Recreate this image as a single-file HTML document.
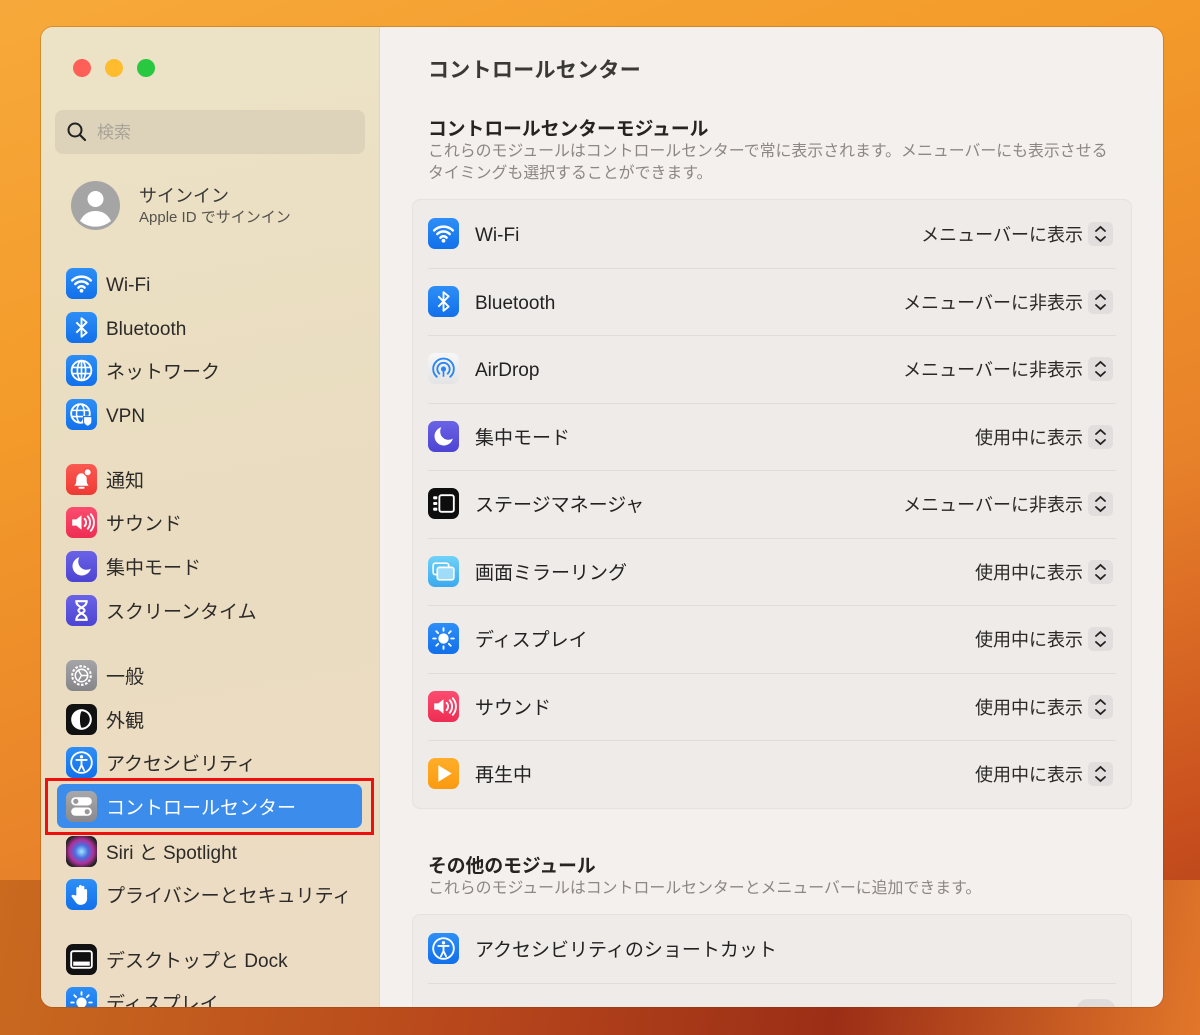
<!DOCTYPE html>
<html><head><meta charset="utf-8">
<style>
*{margin:0;padding:0;box-sizing:border-box}
html,body{width:1200px;height:1035px;overflow:hidden}
body{position:relative;font-family:"Liberation Sans","Noto Sans CJK JP",sans-serif;
background:linear-gradient(160deg,#f6a93a 0%,#f39a2a 30%,#e8822a 60%,#c9501e 85%,#a93a18 100%);}
.bgshape{position:absolute;left:0;top:880px;width:1200px;height:155px;background:linear-gradient(100deg,#c96a1f 0%,#b8471c 40%,#9b2e16 70%,#e2772a 100%)}
.win{position:absolute;left:41px;top:27px;width:1122px;height:980px;border-radius:12px;overflow:hidden;background:#f4f0ee;box-shadow:0 0 0 1px rgba(120,60,0,.25)}
.side{position:absolute;left:0;top:0;width:339px;height:980px;background:linear-gradient(170deg,#ece3c6 0%,#eadcc0 50%,#ecdcc4 100%);border-right:1px solid #e0d6c8}
.dot{position:absolute;top:32px;width:18px;height:18px;border-radius:50%}
.search{position:absolute;left:14px;top:83px;width:310px;height:44px;border-radius:8px;background:#ddd3bb}
.search span{position:absolute;left:42px;top:1px;line-height:44px;font-size:17px;color:#aaa397}
.si{position:absolute;left:25px;height:31px;width:300px}
.ic{position:absolute;left:0;top:0;width:31px;height:31px;border-radius:7px;overflow:hidden}
.ic svg{width:31px;height:31px;display:block}
.si .t{position:absolute;left:40px;top:2px;line-height:31px;font-size:19px;color:#2c2a28;white-space:nowrap}
.sel{position:absolute;left:16px;top:757px;width:305px;height:44px;border-radius:7px;background:#3c8cec}
.redbox{position:absolute;left:4px;top:751px;width:329px;height:57px;border:3px solid #f00f0f}
.main{position:absolute;left:340px;top:0;width:782px;height:980px}
h1{position:absolute;left:47px;top:27px;font-size:21px;font-weight:bold;color:#3b3936;letter-spacing:.3px}
h2{position:absolute;left:47px;font-size:18.8px;font-weight:bold;color:#262422;line-height:24px}
.desc{position:absolute;left:47px;font-size:15.9px;color:#8c8784;line-height:22px;width:720px;white-space:nowrap}
.card{position:absolute;left:31px;width:720px;border-radius:8px;background:#efebe9;border:1px solid #e6e2df}
.row{position:relative;height:67.5px}
.row+.row:before{content:"";position:absolute;left:15px;right:15px;top:0;border-top:1px solid #e0dcd9}
.row .ic{left:15px;top:18px}
.row .t{position:absolute;left:62px;top:20px;line-height:31px;font-size:19px;color:#222;white-space:nowrap}
.row .v{position:absolute;right:48px;top:20px;line-height:31px;font-size:18px;color:#2a2826;white-space:nowrap}
.step{position:absolute;right:18px;top:22px;width:25px;height:24px;border-radius:5px;background:#e2dedd}
</style></head><body>
<div class="bgshape"></div>
<div class="win">
<div class="side">
 <div class="dot" style="left:32px;background:#fe5f57"></div>
 <div class="dot" style="left:64px;background:#febc2e"></div>
 <div class="dot" style="left:96px;background:#28c840"></div>
 <div class="search"><svg style="position:absolute;left:11px;top:11px" width="22" height="22" viewBox="0 0 22 22"><circle cx="9" cy="9" r="6.5" fill="none" stroke="#222" stroke-width="2"/><path d="M14 14l5 5" stroke="#222" stroke-width="2.2" stroke-linecap="round"/></svg><span>検索</span></div>
 <svg style="position:absolute;left:30px;top:154px" width="49" height="49" viewBox="0 0 49 49"><circle cx="24.5" cy="24.5" r="24.5" fill="#a6a5a6"/><circle cx="24.5" cy="18" r="8" fill="#fff"/><path d="M9 40c4-8 10-10 15.5-10S36 32 40 40a24 24 0 0 1-31 0z" fill="#fff"/></svg>
 <div style="position:absolute;left:98px;top:156px;line-height:26px;font-size:18px;color:#3a3836">サインイン</div>
 <div style="position:absolute;left:98px;top:180px;line-height:22px;font-size:15px;color:#55524e">Apple ID でサインイン</div>

 <div class="si" style="top:241px"><div class="ic" style="background:linear-gradient(#2e8ff7,#1270ea)"><svg viewBox="0 0 30 30"><path d="M6 12a13 13 0 0 1 18 0M9 15.5a8.5 8.5 0 0 1 12 0M12 19a4 4 0 0 1 6 0" fill="none" stroke="#fff" stroke-width="2.4" stroke-linecap="round"/><circle cx="15" cy="22" r="1.8" fill="#fff"/></svg></div><span class="t">Wi-Fi</span></div>
 <div class="si" style="top:285px"><div class="ic" style="background:linear-gradient(#2e8ff7,#1270ea)"><svg viewBox="0 0 30 30"><path d="M10 10l10 10-5 4V6l5 4-10 10" fill="none" stroke="#fff" stroke-width="1.8" stroke-linejoin="round"/></svg></div><span class="t">Bluetooth</span></div>
 <div class="si" style="top:328px"><div class="ic" style="background:linear-gradient(#2e8ff7,#1270ea)"><svg viewBox="0 0 30 30"><circle cx="15" cy="15" r="9.5" fill="none" stroke="#fff" stroke-width="1.8"/><ellipse cx="15" cy="15" rx="4" ry="9.5" fill="none" stroke="#fff" stroke-width="1.6"/><path d="M6 12h18M6 18h18M15 5.5v19" stroke="#fff" stroke-width="1.6"/></svg></div><span class="t">ネットワーク</span></div>
 <div class="si" style="top:372px"><div class="ic" style="background:linear-gradient(#2e8ff7,#1270ea)"><svg viewBox="0 0 30 30"><circle cx="14" cy="14" r="9" fill="none" stroke="#fff" stroke-width="1.8"/><ellipse cx="14" cy="14" rx="3.8" ry="9" fill="none" stroke="#fff" stroke-width="1.5"/><path d="M5 11h18M5 17h18" stroke="#fff" stroke-width="1.5"/><path d="M17 17h8v5c0 2-2 3.5-4 4.5-2-1-4-2.5-4-4.5z" fill="#fff" stroke="#1a78ee" stroke-width="1"/></svg></div><span class="t">VPN</span></div>

 <div class="si" style="top:437px"><div class="ic" style="background:linear-gradient(#fb5a52,#ee3a34)"><svg viewBox="0 0 30 30"><path d="M8 21c2-2 2-4 2-7a5 5 0 0 1 10 0c0 3 0 5 2 7z" fill="#fff"/><rect x="12" y="22" width="6" height="2" rx="1" fill="#fff"/><circle cx="21" cy="8" r="3.5" fill="#fff" stroke="#f34a43" stroke-width="1.2"/></svg></div><span class="t">通知</span></div>
 <div class="si" style="top:480px"><div class="ic" style="background:linear-gradient(#fb4d6f,#ee2d54)"><svg viewBox="0 0 30 30"><path d="M6 12h4l5-4v14l-5-4H6z" fill="#fff"/><path d="M18 11.5a5 5 0 0 1 0 7M21 9a9 9 0 0 1 0 12M24 7a12 12 0 0 1 0 16" fill="none" stroke="#fff" stroke-width="1.8" stroke-linecap="round"/></svg></div><span class="t">サウンド</span></div>
 <div class="si" style="top:524px"><div class="ic" style="background:linear-gradient(#6a62e6,#4d45d2)"><svg viewBox="0 0 30 30"><path d="M13 6a9 9 0 1 0 11 11A8 8 0 0 1 13 6z" fill="#fff"/></svg></div><span class="t">集中モード</span></div>
 <div class="si" style="top:568px"><div class="ic" style="background:linear-gradient(#6a62e6,#4d45d2)"><svg viewBox="0 0 30 30"><path d="M9 6h12M9 24h12M10 6c0 6 8 6 8 9s-8 3-8 9M20 6c0 6-8 6-8 9s8 3 8 9" fill="none" stroke="#fff" stroke-width="2"/></svg></div><span class="t">スクリーンタイム</span></div>

 <div class="si" style="top:633px"><div class="ic" style="background:linear-gradient(#a5a5a8,#86868a)"><svg viewBox="0 0 30 30"><circle cx="15" cy="15" r="9" fill="none" stroke="#fff" stroke-width="2" stroke-dasharray="2.5 1.5"/><circle cx="15" cy="15" r="6" fill="none" stroke="#fff" stroke-width="1.5"/><path d="M15 15l-3-5M15 15h6M15 15l-3 5" stroke="#fff" stroke-width="1.4"/></svg></div><span class="t">一般</span></div>
 <div class="si" style="top:677px"><div class="ic" style="background:#111"><svg viewBox="0 0 30 30"><circle cx="15" cy="15" r="10" fill="#fff"/><path d="M15 7a8 8 0 0 1 0 16c-2-3-2-13 0-16z" fill="#111"/></svg></div><span class="t">外観</span></div>
 <div class="si" style="top:720px"><div class="ic" style="background:linear-gradient(#2e8ff7,#1270ea)"><svg viewBox="0 0 30 30"><circle cx="15" cy="15" r="10" fill="none" stroke="#fff" stroke-width="1.8"/><circle cx="15" cy="9.5" r="1.6" fill="#fff"/><path d="M10 12.5h10M15 12.5v5l-2.5 5M15 17.5l2.5 5" fill="none" stroke="#fff" stroke-width="1.8" stroke-linecap="round"/></svg></div><span class="t">アクセシビリティ</span></div>
 <div class="redbox"></div>
 <div class="sel"></div>
 <div class="si" style="top:764px"><div class="ic" style="background:linear-gradient(#a8a8ab,#8a8a8e)"><svg viewBox="0 0 30 30"><rect x="5" y="6" width="20" height="8" rx="4" fill="#fff"/><circle cx="9.5" cy="10" r="2.5" fill="#999"/><rect x="5" y="16" width="20" height="8" rx="4" fill="#fff"/><circle cx="20.5" cy="20" r="2.5" fill="#999"/></svg></div><span class="t" style="color:#fff">コントロールセンター</span></div>
 <div class="si" style="top:809px"><div class="ic" style="background:radial-gradient(circle at 50% 50%,#9fe7ff 0,#4a6ee0 30%,#b0309a 55%,#222 80%)"></div><span class="t">Siri と Spotlight</span></div>
 <div class="si" style="top:852px"><div class="ic" style="background:linear-gradient(#2e8ff7,#1270ea)"><svg viewBox="0 0 30 30"><path d="M10 16V9a1.3 1.3 0 0 1 2.6 0v5V7a1.3 1.3 0 0 1 2.6 0v7V8a1.3 1.3 0 0 1 2.6 0v7v-4a1.3 1.3 0 0 1 2.6 0v8c0 4-3 6-6 6s-4-1-6-4l-3-4a1.3 1.3 0 0 1 2-1.5z" fill="#fff"/></svg></div><span class="t">プライバシーとセキュリティ</span></div>

 <div class="si" style="top:917px"><div class="ic" style="background:#111"><svg viewBox="0 0 30 30"><rect x="5" y="7" width="20" height="16" rx="2" fill="none" stroke="#fff" stroke-width="1.8"/><rect x="7" y="17" width="16" height="4" fill="#fff"/></svg></div><span class="t">デスクトップと Dock</span></div>
 <div class="si" style="top:960px"><div class="ic" style="background:linear-gradient(#2e8ff7,#1270ea)"><svg viewBox="0 0 30 30"><circle cx="15" cy="15" r="5" fill="#fff"/><path d="M15 5v2.5M5 15h2.5M22.5 15H25M8 8l1.8 1.8M20.2 9.8L22 8" stroke="#fff" stroke-width="1.8" stroke-linecap="round"/></svg></div><span class="t">ディスプレイ</span></div>
</div>

<div class="main">
 <h1>コントロールセンター</h1>
 <h2 style="top:90px">コントロールセンターモジュール</h2>
 <div class="desc" style="top:114px">これらのモジュールはコントロールセンターで常に表示されます。メニューバーにも表示させる<br>タイミングも選択することができます。</div>
 <div class="card" style="top:172px">
  <div class="row"><div class="ic" style="background:linear-gradient(#2e8ff7,#1270ea)"><svg viewBox="0 0 30 30"><path d="M6 12a13 13 0 0 1 18 0M9 15.5a8.5 8.5 0 0 1 12 0M12 19a4 4 0 0 1 6 0" fill="none" stroke="#fff" stroke-width="2.4" stroke-linecap="round"/><circle cx="15" cy="22" r="1.8" fill="#fff"/></svg></div><span class="t">Wi-Fi</span><span class="v">メニューバーに表示</span><div class="step"><svg width="25" height="24" viewBox="0 0 25 24"><path d="M8 9l4.5-4 4.5 4M8 15l4.5 4 4.5-4" fill="none" stroke="#222" stroke-width="1.8" stroke-linecap="round"/></svg></div></div>
  <div class="row"><div class="ic" style="background:linear-gradient(#2e8ff7,#1270ea)"><svg viewBox="0 0 30 30"><path d="M10 10l10 10-5 4V6l5 4-10 10" fill="none" stroke="#fff" stroke-width="1.8" stroke-linejoin="round"/></svg></div><span class="t">Bluetooth</span><span class="v">メニューバーに非表示</span><div class="step"><svg width="25" height="24" viewBox="0 0 25 24"><path d="M8 9l4.5-4 4.5 4M8 15l4.5 4 4.5-4" fill="none" stroke="#222" stroke-width="1.8" stroke-linecap="round"/></svg></div></div>
  <div class="row"><div class="ic" style="background:linear-gradient(#f7f7f7,#e4e4e4)"><svg viewBox="0 0 30 30"><path d="M11 20a6 6 0 1 1 8 0M8.5 23a10 10 0 1 1 13 0" fill="none" stroke="#2a86f2" stroke-width="1.8" stroke-linecap="round"/><circle cx="15" cy="15.5" r="2.5" fill="#2a86f2"/><path d="M15 17v6" stroke="#2a86f2" stroke-width="1.6"/></svg></div><span class="t">AirDrop</span><span class="v">メニューバーに非表示</span><div class="step"><svg width="25" height="24" viewBox="0 0 25 24"><path d="M8 9l4.5-4 4.5 4M8 15l4.5 4 4.5-4" fill="none" stroke="#222" stroke-width="1.8" stroke-linecap="round"/></svg></div></div>
  <div class="row"><div class="ic" style="background:linear-gradient(#6a62e6,#4d45d2)"><svg viewBox="0 0 30 30"><path d="M13 6a9 9 0 1 0 11 11A8 8 0 0 1 13 6z" fill="#fff"/></svg></div><span class="t">集中モード</span><span class="v">使用中に表示</span><div class="step"><svg width="25" height="24" viewBox="0 0 25 24"><path d="M8 9l4.5-4 4.5 4M8 15l4.5 4 4.5-4" fill="none" stroke="#222" stroke-width="1.8" stroke-linecap="round"/></svg></div></div>
  <div class="row"><div class="ic" style="background:#0e0e0e"><svg viewBox="0 0 30 30"><rect x="11" y="7" width="14" height="16" rx="2" fill="none" stroke="#fff" stroke-width="1.8"/><rect x="5" y="8" width="4" height="3" rx="1" fill="#fff"/><rect x="5" y="13.5" width="4" height="3" rx="1" fill="#fff"/><rect x="5" y="19" width="4" height="3" rx="1" fill="#fff"/></svg></div><span class="t">ステージマネージャ</span><span class="v">メニューバーに非表示</span><div class="step"><svg width="25" height="24" viewBox="0 0 25 24"><path d="M8 9l4.5-4 4.5 4M8 15l4.5 4 4.5-4" fill="none" stroke="#222" stroke-width="1.8" stroke-linecap="round"/></svg></div></div>
  <div class="row"><div class="ic" style="background:linear-gradient(#6fd2f8,#3aa9ee)"><svg viewBox="0 0 30 30"><rect x="5" y="7" width="15" height="11" rx="2" fill="none" stroke="#fff" stroke-width="1.6"/><rect x="9" y="11" width="16" height="12" rx="2" fill="#9fdcf8" stroke="#fff" stroke-width="1.6"/></svg></div><span class="t">画面ミラーリング</span><span class="v">使用中に表示</span><div class="step"><svg width="25" height="24" viewBox="0 0 25 24"><path d="M8 9l4.5-4 4.5 4M8 15l4.5 4 4.5-4" fill="none" stroke="#222" stroke-width="1.8" stroke-linecap="round"/></svg></div></div>
  <div class="row"><div class="ic" style="background:linear-gradient(#2e8ff7,#1270ea)"><svg viewBox="0 0 30 30"><circle cx="15" cy="15" r="5" fill="#fff"/><path d="M15 5v2.5M15 22.5V25M5 15h2.5M22.5 15H25M8 8l1.8 1.8M20.2 20.2L22 22M8 22l1.8-1.8M20.2 9.8L22 8" stroke="#fff" stroke-width="1.8" stroke-linecap="round"/></svg></div><span class="t">ディスプレイ</span><span class="v">使用中に表示</span><div class="step"><svg width="25" height="24" viewBox="0 0 25 24"><path d="M8 9l4.5-4 4.5 4M8 15l4.5 4 4.5-4" fill="none" stroke="#222" stroke-width="1.8" stroke-linecap="round"/></svg></div></div>
  <div class="row"><div class="ic" style="background:linear-gradient(#fb4d6f,#ee2d54)"><svg viewBox="0 0 30 30"><path d="M6 12h4l5-4v14l-5-4H6z" fill="#fff"/><path d="M18 11.5a5 5 0 0 1 0 7M21 9a9 9 0 0 1 0 12M24 7a12 12 0 0 1 0 16" fill="none" stroke="#fff" stroke-width="1.8" stroke-linecap="round"/></svg></div><span class="t">サウンド</span><span class="v">使用中に表示</span><div class="step"><svg width="25" height="24" viewBox="0 0 25 24"><path d="M8 9l4.5-4 4.5 4M8 15l4.5 4 4.5-4" fill="none" stroke="#222" stroke-width="1.8" stroke-linecap="round"/></svg></div></div>
  <div class="row"><div class="ic" style="background:linear-gradient(#ffae2a,#fb9a10)"><svg viewBox="0 0 30 30"><path d="M10 7l13 8-13 8z" fill="#fff"/></svg></div><span class="t">再生中</span><span class="v">使用中に表示</span><div class="step"><svg width="25" height="24" viewBox="0 0 25 24"><path d="M8 9l4.5-4 4.5 4M8 15l4.5 4 4.5-4" fill="none" stroke="#222" stroke-width="1.8" stroke-linecap="round"/></svg></div></div>
 </div>
 <h2 style="top:827px">その他のモジュール</h2>
 <div class="desc" style="top:851px">これらのモジュールはコントロールセンターとメニューバーに追加できます。</div>
 <div class="card" style="top:887px;height:140px">
  <div class="row"><div class="ic" style="background:linear-gradient(#2e8ff7,#1270ea)"><svg viewBox="0 0 30 30"><circle cx="15" cy="15" r="10" fill="none" stroke="#fff" stroke-width="1.8"/><circle cx="15" cy="9.5" r="1.6" fill="#fff"/><path d="M10 12.5h10M15 12.5v5l-2.5 5M15 17.5l2.5 5" fill="none" stroke="#fff" stroke-width="1.8" stroke-linecap="round"/></svg></div><span class="t">アクセシビリティのショートカット</span></div>
  <div class="row"><span class="t" style="color:#333">メニューバーに表示</span><div style="position:absolute;right:15px;top:16px;width:40px;height:24px;border-radius:12px;background:#e0dcdb"></div></div>
 </div>
</div>
</div>
</body></html>
